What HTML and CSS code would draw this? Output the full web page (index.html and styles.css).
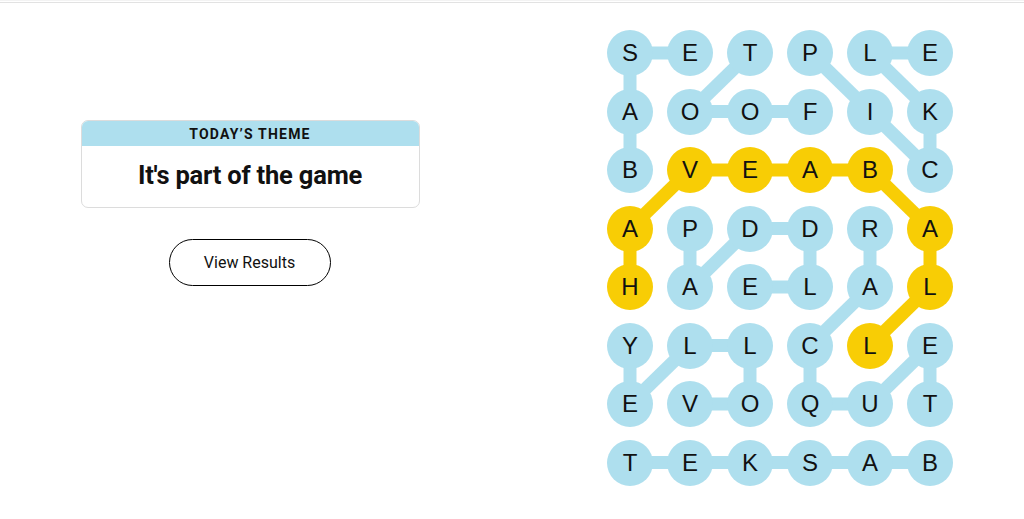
FILE: index.html
```html
<!DOCTYPE html>
<html lang="en">
<head>
<meta charset="utf-8">
<title>Strands</title>
<link rel="stylesheet" href="styles.css">
</head>
<body>
<div class="topbar"></div>
<main class="main">
  <section class="left">
    <div class="theme-card">
      <div class="theme-head">TODAY’S THEME</div>
      <div class="theme-body">It's part of the game</div>
    </div>
    <button class="results-btn">View Results</button>
  </section>
  <section class="board">
    <svg class="links" width="346" height="456" viewBox="0 0 346 456" aria-hidden="true">
      <g class="blue">
        <line x1="23" y1="23" x2="83" y2="23"/>
        <line x1="23" y1="23" x2="23" y2="140"/>
        <line x1="143" y1="23" x2="83" y2="81.5"/>
        <line x1="83" y1="81.5" x2="203" y2="81.5"/>
        <line x1="203" y1="23" x2="263" y2="81.5"/>
        <line x1="263" y1="81.5" x2="323" y2="140"/>
        <line x1="263" y1="23" x2="323" y2="23"/>
        <line x1="263" y1="23" x2="323" y2="81.5"/>
        <line x1="323" y1="81.5" x2="323" y2="140"/>
        <line x1="83" y1="198.5" x2="83" y2="257"/>
        <line x1="83" y1="257" x2="143" y2="198.5"/>
        <line x1="143" y1="198.5" x2="203" y2="198.5"/>
        <line x1="203" y1="198.5" x2="203" y2="257"/>
        <line x1="143" y1="257" x2="203" y2="257"/>
        <line x1="263" y1="198.5" x2="263" y2="257"/>
        <line x1="263" y1="257" x2="203" y2="315.5"/>
        <line x1="23" y1="315.5" x2="23" y2="374"/>
        <line x1="83" y1="315.5" x2="23" y2="374"/>
        <line x1="83" y1="315.5" x2="143" y2="315.5"/>
        <line x1="143" y1="315.5" x2="143" y2="374"/>
        <line x1="83" y1="374" x2="143" y2="374"/>
        <line x1="203" y1="315.5" x2="203" y2="374"/>
        <line x1="203" y1="374" x2="263" y2="374"/>
        <line x1="263" y1="374" x2="323" y2="315.5"/>
        <line x1="323" y1="315.5" x2="323" y2="374"/>
        <line x1="23" y1="432.5" x2="323" y2="432.5"/>
      </g>
      <g class="gold">
        <line x1="23" y1="257" x2="23" y2="198.5"/>
        <line x1="23" y1="198.5" x2="83" y2="140"/>
        <line x1="83" y1="140" x2="263" y2="140"/>
        <line x1="263" y1="140" x2="323" y2="198.5"/>
        <line x1="323" y1="198.5" x2="323" y2="257"/>
        <line x1="323" y1="257" x2="263" y2="315.5"/>
      </g>
    </svg>
    <div class="grid">
      <span class="cell">S</span><span class="cell">E</span><span class="cell">T</span><span class="cell">P</span><span class="cell">L</span><span class="cell">E</span>
      <span class="cell">A</span><span class="cell">O</span><span class="cell">O</span><span class="cell">F</span><span class="cell">I</span><span class="cell">K</span>
      <span class="cell">B</span><span class="cell found">V</span><span class="cell found">E</span><span class="cell found">A</span><span class="cell found">B</span><span class="cell">C</span>
      <span class="cell found">A</span><span class="cell">P</span><span class="cell">D</span><span class="cell">D</span><span class="cell">R</span><span class="cell found">A</span>
      <span class="cell found">H</span><span class="cell">A</span><span class="cell">E</span><span class="cell">L</span><span class="cell">A</span><span class="cell found">L</span>
      <span class="cell">Y</span><span class="cell">L</span><span class="cell">L</span><span class="cell">C</span><span class="cell found">L</span><span class="cell">E</span>
      <span class="cell">E</span><span class="cell">V</span><span class="cell">O</span><span class="cell">Q</span><span class="cell">U</span><span class="cell">T</span>
      <span class="cell">T</span><span class="cell">E</span><span class="cell">K</span><span class="cell">S</span><span class="cell">A</span><span class="cell">B</span>
    </div>
  </section>
</main>
</body>
</html>
```
FILE: styles.css
```css
* { box-sizing: border-box; }
html, body { margin: 0; padding: 0; background: #fff; }
body {
  font-family: Roboto, "Liberation Sans", Arial, sans-serif;
  color: #000;
  width: 1024px;
  height: 519px;
  overflow: hidden;
}
.topbar {
  height: 3px;
  border-top: 1px solid #f3f3f3;
  border-bottom: 1px solid #e2e2e2;
}
.main {
  display: flex;
  align-items: flex-start;
}
.left {
  width: 500px;
  padding-top: 117px;
  display: flex;
  flex-direction: column;
  align-items: center;
}
.theme-card {
  width: 339px;
  border: 1px solid #dcdcdc;
  border-radius: 7px;
  overflow: hidden;
  text-align: center;
}
.theme-head {
  background: #aedfee;
  height: 25px;
  line-height: 26px;
  font-size: 14px;
  font-weight: 700;
  letter-spacing: 1.2px;
  color: #111;
}
.theme-body {
  height: 61px;
  line-height: 58px;
  font-size: 25.5px;
  font-weight: 700;
  letter-spacing: -0.2px;
  color: #111;
}
.results-btn {
  margin-top: 31px;
  width: 162px;
  height: 47px;
  border: 1px solid #000;
  border-radius: 24px;
  background: #fff;
  font-family: Roboto, "Liberation Sans", Arial, sans-serif;
  font-size: 16px;
  color: #111;
  padding: 0;
  margin-left: -1px;
}
.board {
  position: relative;
  margin-left: 107px;
  margin-top: 27px;
  width: 346px;
  height: 456px;
}
.links {
  position: absolute;
  left: 0;
  top: 0;
}
.links line {
  stroke-width: 13;
  stroke-linecap: butt;
}
.blue line { stroke: #aedfee; }
.gold line { stroke: #f8cd05; }
.grid {
  position: relative;
  display: grid;
  grid-template-columns: repeat(6, 46px);
  grid-auto-rows: 46px;
  column-gap: 14px;
  row-gap: 12.5px;
}
.cell {
  width: 46px;
  height: 46px;
  border-radius: 50%;
  background: #aedfee;
  display: flex;
  align-items: center;
  justify-content: center;
  font-family: "Liberation Sans", Arial, sans-serif;
  font-size: 24px;
  color: #111;
}
.cell.found { background: #f8cd05; }
```
